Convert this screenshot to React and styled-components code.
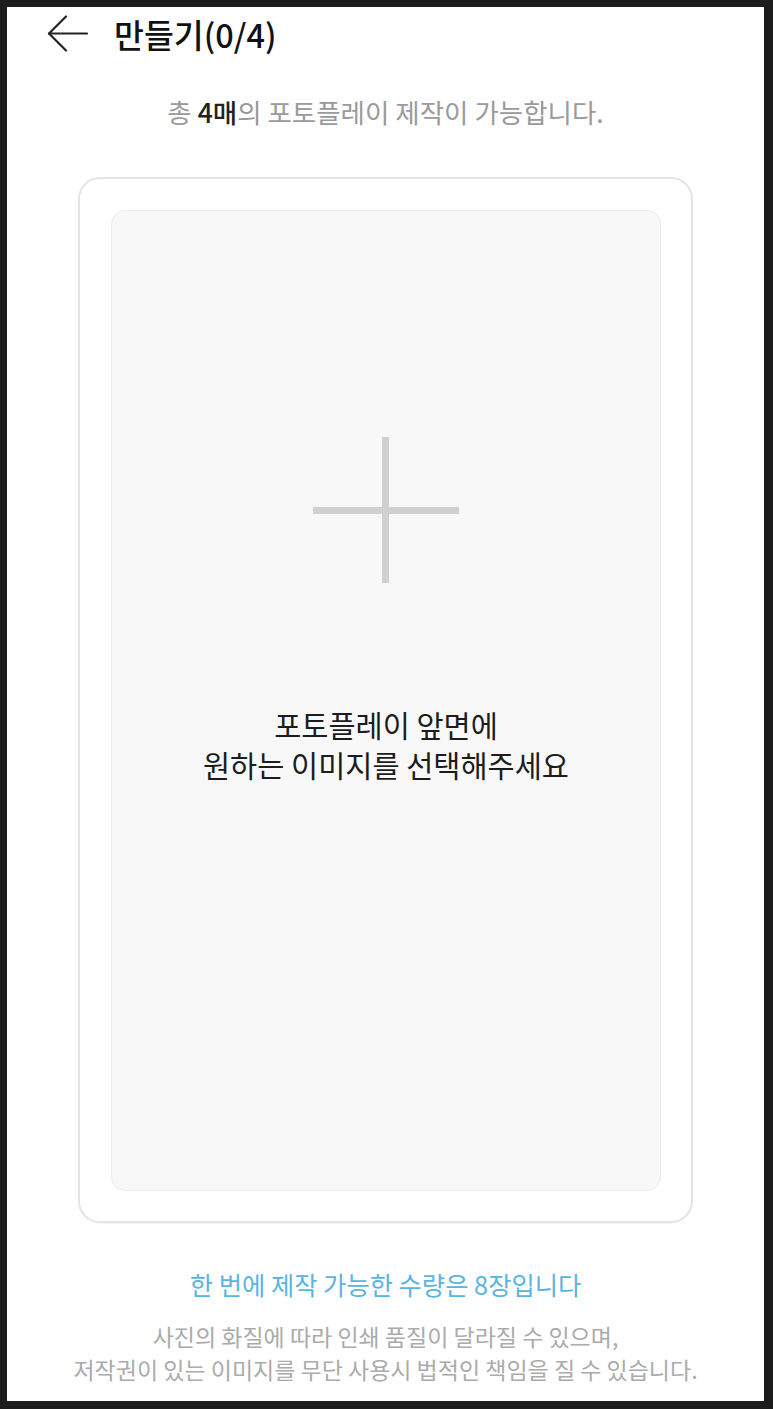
import React from 'react';
import styled, { createGlobalStyle } from 'styled-components';

const GlobalStyle = createGlobalStyle`
    html, body {
        margin: 0;
        padding: 0;
        background: #1c1c1c;
    }
    body {
        font-family: "Noto Sans CJK KR", "Noto Sans", sans-serif;
    }
`;

const Frame = styled.div`
    padding: 7px 9px 8px 7px;
    height: 1409px;
    box-sizing: border-box;
`;

const Screen = styled.div`
    background: #fff;
    height: 100%;
    display: flex;
    flex-direction: column;
    align-items: center;
`;

const Header = styled.header`
    align-self: stretch;
    height: 52px;
    display: flex;
    align-items: center;
    padding-left: 40px;
    gap: 26px;
`;

const BackButton = styled.button`
    border: 0;
    background: none;
    padding: 0;
    display: flex;
    cursor: pointer;
`;

const Title = styled.h1`
    margin: 0;
    font-size: 32.5px;
    font-weight: 500;
    color: #111;
`;

const Notice = styled.p`
    margin: 38px 0 0;
    font-size: 26.5px;
    line-height: 30px;
    color: #9a9a9a;
`;

const Count = styled.strong`
    font-weight: 500;
    color: #222;
`;

const Card = styled.section`
    margin-top: 50px;
    width: 615px;
    height: 1046px;
    box-sizing: border-box;
    padding: 31px 30px 30px 31px;
    border: 2px solid #e4e4e4;
    border-radius: 22px;
    box-shadow: 0 1px 2px rgba(0, 0, 0, 0.04);
`;

const Picker = styled.button`
    width: 100%;
    height: 100%;
    border: 1px solid #ececec;
    border-radius: 14px;
    background: #f8f8f8;
    display: flex;
    flex-direction: column;
    align-items: center;
    padding: 226px 0 0;
    cursor: pointer;
    font-family: inherit;
`;

const Plus = styled.div`
    width: 146px;
    height: 146px;
    position: relative;
    &::before,
    &::after {
        content: '';
        position: absolute;
        background: #d0d0d0;
    }
    &::before {
        left: 69px;
        top: 0;
        width: 7px;
        height: 146px;
    }
    &::after {
        top: 70px;
        left: 0;
        width: 146px;
        height: 7px;
    }
`;

const PickerText = styled.p`
    margin: 121px 0 0;
    font-size: 29.5px;
    line-height: 40px;
    color: #1c1c1c;
`;

const Limit = styled.p`
    margin: 46px 0 0;
    font-size: 25.3px;
    line-height: 30px;
    color: #5ab4e2;
`;

const Caution = styled.p`
    margin: 21px 0 0;
    font-size: 23px;
    line-height: 33px;
    color: #ababab;
    text-align: center;
`;

const BackArrow = () => (
    <svg width="41" height="37" viewBox="0 0 41 37" fill="none" stroke="#222" strokeWidth="2.2" strokeLinecap="round">
        <path d="M2 18.5H40" />
        <path d="M19 1.5L2 18.5L19 35.5" strokeLinejoin="round" />
    </svg>
);

export default function App() {
    return (
        <>
            <GlobalStyle />
            <Frame>
                <Screen>
                    <Header>
                        <BackButton aria-label="뒤로">
                            <BackArrow />
                        </BackButton>
                        <Title>만들기(0/4)</Title>
                    </Header>
                    <Notice>
                        총 <Count>4매</Count>의 포토플레이 제작이 가능합니다.
                    </Notice>
                    <Card>
                        <Picker>
                            <Plus />
                            <PickerText>
                                포토플레이 앞면에
                                <br />
                                원하는 이미지를 선택해주세요
                            </PickerText>
                        </Picker>
                    </Card>
                    <Limit>한 번에 제작 가능한 수량은 8장입니다</Limit>
                    <Caution>
                        사진의 화질에 따라 인쇄 품질이 달라질 수 있으며,
                        <br />
                        저작권이 있는 이미지를 무단 사용시 법적인 책임을 질 수 있습니다.
                    </Caution>
                </Screen>
            </Frame>
        </>
    );
}
